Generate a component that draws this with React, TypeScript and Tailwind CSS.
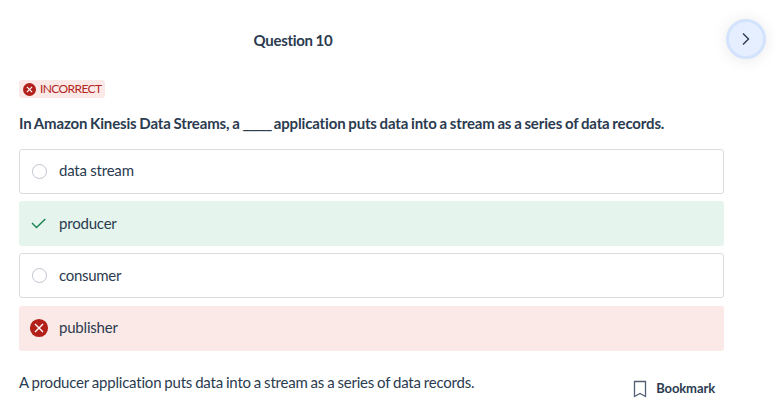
export default function App() {
  return (
    <main className="h-[410px] w-[779px] overflow-hidden bg-white font-['Lato',sans-serif] text-[#2b3b50]">
      <header className="flex h-[80px] items-start">
        <h1 className="ml-[19px] w-[548px] pt-[29px] text-center text-[15px] leading-[22px] font-bold tracking-[-0.3px] [word-spacing:-0.5px]">Question 10</h1>
        <button aria-label="Next question" className="mt-[19px] ml-[159px] flex size-10 items-center justify-center rounded-full border-3 border-[#d3e3fd] bg-[#e5efff] shadow-[0_1px_16px_rgba(0,0,0,0.09)]">
          <svg width="16" height="16" viewBox="0 0 16 16" fill="none" stroke="currentColor" strokeWidth="1.4"><path d="m5 2.5 5.5 5.5L5 13.5" /></svg>
        </button>
      </header>
      <section className="ml-[19px] w-[705px]">
        <div className="flex h-[18px] w-[86px] items-center gap-1 rounded-[3px] bg-[#fbe9e7] pl-1 text-[12px] tracking-[-0.6px] text-[#b3261e]">
          <svg className="shrink-0" width="13" height="13" viewBox="0 0 20 20"><circle cx="10" cy="10" r="10" fill="#b3201a" /><path d="m6 6 8 8m0-8-8 8" stroke="white" strokeWidth="1.8" /></svg>
          INCORRECT
        </div>
        <h2 className="mt-[14px] h-[37px] text-[15px] leading-[22px] font-bold tracking-[-0.16px] whitespace-nowrap [word-spacing:-0.65px]">In Amazon Kinesis Data Streams, a <span className="tracking-[-1.3px]">_____</span> application puts data into a stream as a series of data records.</h2>
        <ul className="flex flex-col text-[15px] tracking-[-0.2px] [word-spacing:-0.2px]">
          <li className="flex h-[45px] items-center rounded-[3px] border border-[#d9dbe0] pb-[2px] pl-3"><span className="mt-px mr-3 size-[15px] rounded-full border border-[#bfc5ce]" />data stream</li>
          <li className="mt-[7px] flex h-[45px] items-center rounded-[3px] bg-[#e5f4ec] pb-px pl-3"><svg className="mr-3" width="16" height="16" viewBox="0 0 16 16" fill="none" stroke="#17834f" strokeWidth="1.4"><path d="m1 8 4.5 4.5L14.3 4" /></svg>producer</li>
          <li className="mt-[7px] flex h-[45px] items-center rounded-[3px] border border-[#d9dbe0] pb-px pl-3 tracking-[-0.3px]"><span className="mt-px mr-3 size-[15px] rounded-full border border-[#bfc5ce]" />consumer</li>
          <li className="mt-[8px] flex h-[45px] items-center rounded-[3px] bg-[#fbe9e7] pb-[2px] pl-[10px]"><svg className="mt-px mr-[10px]" width="20" height="20" viewBox="0 0 20 20"><circle cx="10" cy="10" r="9.1" fill="#b3201a" /><path d="m6 6 8 8m0-8-8 8" stroke="white" strokeWidth="1.4" /></svg>publisher</li>
        </ul>
      </section>
      <footer className="mt-[20px] ml-[19px] flex w-[705px] justify-between">
        <p className="text-[15px] leading-[22px] tracking-[-0.2px] [word-spacing:-0.65px]">A producer application puts data into a stream as a series of data records.</p>
        <button className="mt-[7px] mr-[9px] flex h-[22px] items-center gap-[9px] text-[13px] font-bold tracking-[-0.1px]"><svg width="14" height="20" viewBox="0 0 14 20" fill="none" stroke="#536074" strokeWidth="1.3"><path d="M1.5 2.5h11v15L7 14.5l-5.5 3z" /></svg>Bookmark</button>
      </footer>
    </main>
  );
}
